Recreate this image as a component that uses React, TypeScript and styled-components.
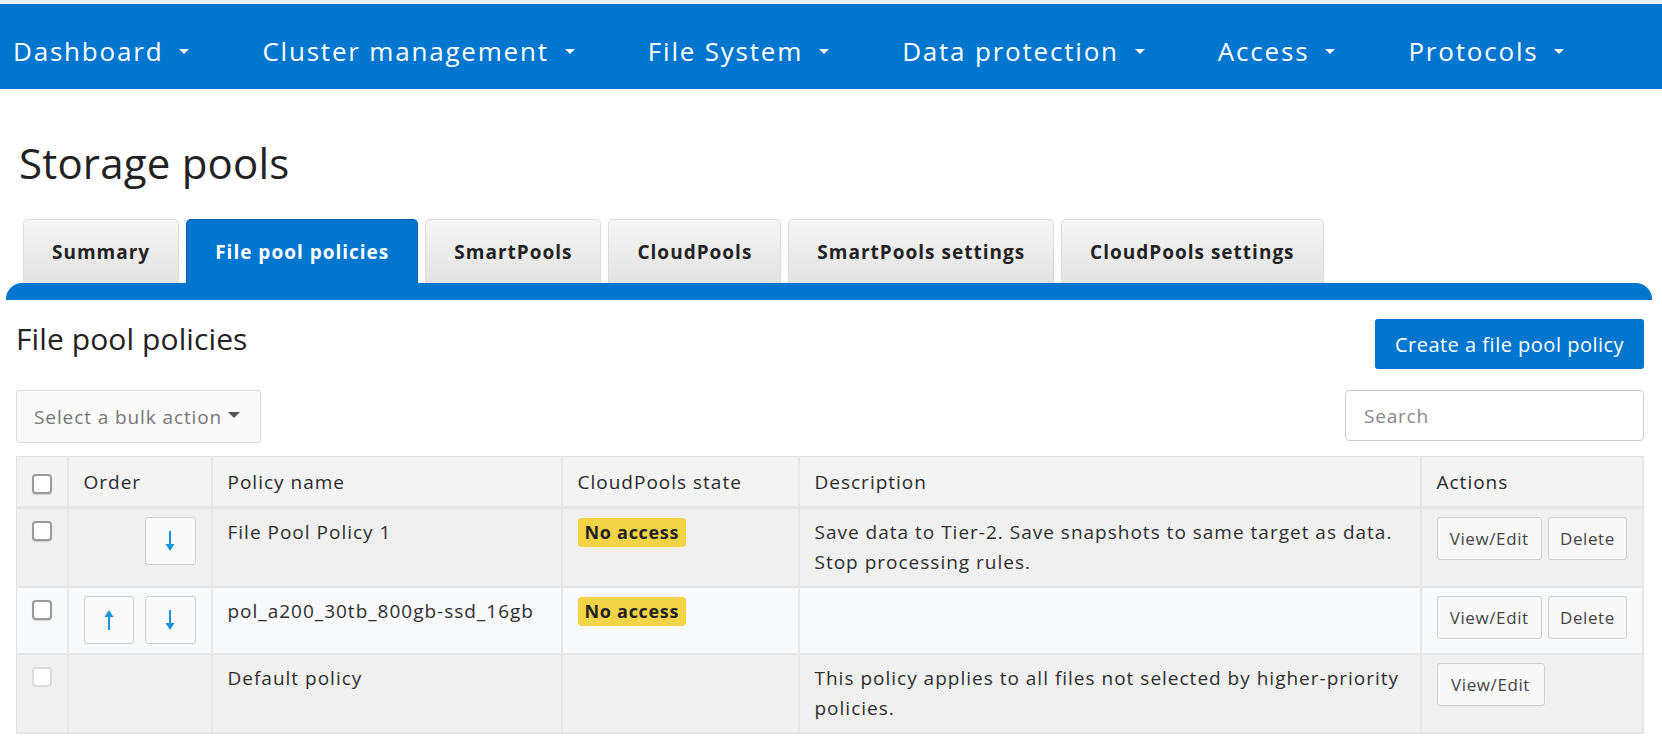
import styled, { createGlobalStyle } from "styled-components";

const GlobalStyle = createGlobalStyle`
    body {
        margin: 0;
        background: #fff;
        font-family: "Open Sans", "Noto Sans", sans-serif;
        color: #333;
    }
    * {
        box-sizing: border-box;
    }
`;

const BLUE = "#0076ce";

const Page = styled.div`
    padding-top: 4px;
    background: linear-gradient(#e8f1fa 0, #e8f1fa 4px, #fff 4px);
`;

const NavBar = styled.nav`
    height: 85px;
    background-color: ${BLUE};
    display: flex;
    align-items: center;
    padding: 8px 0 0 13px;
    gap: 73px;
`;

const NavItem = styled.div`
    color: #fff;
    font-size: 26px;
    letter-spacing: 1.8px;
    display: flex;
    align-items: center;
    gap: 16px;
`;

const Caret = styled.span`
    width: 0;
    height: 0;
    border-left: 5px solid transparent;
    border-right: 5px solid transparent;
    border-top: 5px solid #fff;
    margin-top: 2px;
`;

const Content = styled.main`
    padding: 0 18px 0 16px;
`;

const Title = styled.h1`
    margin: 49px 0 0 3px;
    font-size: 42px;
    font-weight: 400;
    line-height: 50px;
    color: #222;
    letter-spacing: 0.2px;
`;

const TabRow = styled.div`
    display: flex;
    gap: 7px;
    padding-left: 7px;
    margin-top: 31px;
`;

const Tab = styled.div<{ $active?: boolean }>`
    height: 64px;
    padding: 0 28px;
    display: flex;
    align-items: center;
    justify-content: center;
    font-size: 19px;
    font-weight: 700;
    letter-spacing: 1px;
    border-radius: 5px 5px 0 0;
    border: 1px solid ${(p) => (p.$active ? "#0a5fa6" : "#dcdcdc")};
    border-bottom: none;
    color: ${(p) => (p.$active ? "#fff" : "#222")};
    background: ${(p) =>
        p.$active ? BLUE : "linear-gradient(#f6f6f6, #e2e2e2)"};
`;

const TabBar = styled.div`
    height: 17px;
    margin: 0 -8px 0 -10px;
    background-color: ${BLUE};
    border-radius: 16px 16px 0 0;
`;

const SectionHeader = styled.div`
    display: flex;
    justify-content: space-between;
    align-items: flex-start;
    margin-top: 19px;
`;

const SectionTitle = styled.h2`
    margin: 1px 0 0;
    font-size: 30px;
    font-weight: 400;
    line-height: 38px;
    letter-spacing: 0.1px;
    color: #222;
`;

const PrimaryButton = styled.button`
    height: 50px;
    width: 269px;
    border: none;
    border-radius: 3px;
    background-color: ${BLUE};
    color: #fff;
    font-family: inherit;
    font-size: 20px;
    font-weight: 500;
    letter-spacing: 0.5px;
    padding: 0;
`;

const Toolbar = styled.div`
    display: flex;
    justify-content: space-between;
    align-items: flex-start;
    margin-top: 21px;
`;

const BulkSelect = styled.div`
    width: 245px;
    height: 53px;
    border: 1px solid #dcdcdc;
    border-radius: 3px;
    background: #fafafa;
    color: #777;
    font-size: 19px;
    letter-spacing: 0.9px;
    display: flex;
    align-items: center;
    padding-left: 17px;
    gap: 6px;
    white-space: nowrap;
`;

const DarkCaret = styled.span`
    width: 0;
    height: 0;
    border-left: 6px solid transparent;
    border-right: 6px solid transparent;
    border-top: 6px solid #555;
    margin-top: -3px;
`;

const SearchInput = styled.input`
    width: 299px;
    height: 51px;
    border: 1px solid #ccc;
    border-radius: 4px;
    padding-left: 18px;
    font-family: inherit;
    font-size: 19px;
    letter-spacing: 0.8px;
    &::placeholder {
        color: #888;
    }
`;

const Table = styled.table`
    width: 100%;
    margin-top: 13px;
    border-collapse: collapse;
    table-layout: fixed;
    font-size: 19px;
    letter-spacing: 1px;
    border: 1px solid #e4e4e4;
`;

const Th = styled.th`
    background: #f3f3f3;
    text-align: left;
    font-weight: 500;
    color: #2a2a2a;
    padding: 10px 15px 9px;
    line-height: 30px;
    border-right: 2px solid #e6e6e6;
    border-bottom: 3px solid #e6e6e6;
`;

const Tr = styled.tr<{ $light?: boolean }>`
    background: ${(p) => (p.$light ? "#f8f9fa" : "#f0f0f0")};
    border-bottom: 2px solid #e6e6e6;
`;

const Td = styled.td`
    vertical-align: top;
    padding: 8px 15px 9px;
    line-height: 30px;
    border-right: 2px solid #e6e6e6;
    color: #2e2e2e;
`;

const Check = styled.span<{ $disabled?: boolean }>`
    display: block;
    width: 20px;
    height: 20px;
    margin: 4px 0 0 0;
    border: 2px solid ${(p) => (p.$disabled ? "#dadada" : "#9a9a9a")};
    border-radius: 4px;
    background: #fff;
    box-shadow: ${(p) => (p.$disabled ? "none" : "0 1px 1px rgba(0,0,0,0.15)")};
`;

const OrderCell = styled.div`
    display: flex;
    gap: 11px;
`;

const ArrowButton = styled.button<{ $hidden?: boolean }>`
    width: 51px;
    height: 48px;
    border: 1px solid #cfcfcf;
    border-radius: 3px;
    background: #fafafa;
    display: flex;
    align-items: center;
    justify-content: center;
    padding: 0;
    visibility: ${(p) => (p.$hidden ? "hidden" : "visible")};
`;

const Badge = styled.span`
    display: inline-block;
    background: #f4d447;
    color: #222;
    font-weight: 700;
    font-size: 18px;
    letter-spacing: 0.7px;
    line-height: 29px;
    padding: 0 7px;
    border-radius: 4px;
    margin-top: 1px;
`;

const Actions = styled.div`
    display: flex;
    gap: 6px;
`;

const SmallButton = styled.button<{ $w: number }>`
    width: ${(p) => p.$w}px;
    height: 43px;
    border: 1px solid #cfcfcf;
    border-radius: 3px;
    background: #f8f8f8;
    font-family: inherit;
    font-size: 17px;
    letter-spacing: 0.6px;
    color: #444;
    padding: 0;
`;

function Arrow({ up }: { up?: boolean }) {
    return (
        <svg width="10" height="22" viewBox="0 0 10 22">
            <g transform={up ? "rotate(180 5 11)" : undefined} fill="#1a93d8">
                <rect x="4" y="1" width="2" height="15" />
                <polygon points="0.5,14 9.5,14 5,21" />
            </g>
        </svg>
    );
}

const navItems = [
    "Dashboard",
    "Cluster management",
    "File System",
    "Data protection",
    "Access",
    "Protocols",
];

const tabs = [
    "Summary",
    "File pool policies",
    "SmartPools",
    "CloudPools",
    "SmartPools settings",
    "CloudPools settings",
];

interface Policy {
    name: string;
    up: boolean;
    down: boolean;
    state?: string;
    description?: string;
    canDelete: boolean;
    isDefault?: boolean;
}

const policies: Policy[] = [
    {
        name: "File Pool Policy 1",
        up: false,
        down: true,
        state: "No access",
        description:
            "Save data to Tier-2. Save snapshots to same target as data. Stop processing rules.",
        canDelete: true,
    },
    {
        name: "pol_a200_30tb_800gb-ssd_16gb",
        up: true,
        down: true,
        state: "No access",
        canDelete: true,
    },
    {
        name: "Default policy",
        up: false,
        down: false,
        description:
            "This policy applies to all files not selected by higher-priority policies.",
        canDelete: false,
        isDefault: true,
    },
];

export default function App() {
    return (
        <Page>
            <GlobalStyle />
            <NavBar>
                {navItems.map((item) => (
                    <NavItem key={item}>
                        {item}
                        <Caret />
                    </NavItem>
                ))}
            </NavBar>
            <Content>
                <Title>Storage pools</Title>
                <TabRow>
                    {tabs.map((t) => (
                        <Tab key={t} $active={t === "File pool policies"}>
                            {t}
                        </Tab>
                    ))}
                </TabRow>
                <TabBar />
                <SectionHeader>
                    <SectionTitle>File pool policies</SectionTitle>
                    <PrimaryButton>Create a file pool policy</PrimaryButton>
                </SectionHeader>
                <Toolbar>
                    <BulkSelect>
                        Select a bulk action
                        <DarkCaret />
                    </BulkSelect>
                    <SearchInput placeholder="Search" />
                </Toolbar>
                <Table>
                    <colgroup>
                        <col style={{ width: 51 }} />
                        <col style={{ width: 144 }} />
                        <col style={{ width: 350 }} />
                        <col style={{ width: 237 }} />
                        <col style={{ width: 622 }} />
                        <col />
                    </colgroup>
                    <thead>
                        <tr>
                            <Th>
                                <Check />
                            </Th>
                            <Th>Order</Th>
                            <Th>Policy name</Th>
                            <Th>CloudPools state</Th>
                            <Th>Description</Th>
                            <Th>Actions</Th>
                        </tr>
                    </thead>
                    <tbody>
                        {policies.map((p, i) => (
                            <Tr key={p.name} $light={i === 1}>
                                <Td>
                                    <Check $disabled={p.isDefault} />
                                </Td>
                                <Td>
                                    {(p.up || p.down) && (
                                        <OrderCell>
                                            <ArrowButton $hidden={!p.up}>
                                                <Arrow up />
                                            </ArrowButton>
                                            <ArrowButton $hidden={!p.down}>
                                                <Arrow />
                                            </ArrowButton>
                                        </OrderCell>
                                    )}
                                </Td>
                                <Td>{p.name}</Td>
                                <Td>{p.state && <Badge>{p.state}</Badge>}</Td>
                                <Td>{p.description}</Td>
                                <Td>
                                    <Actions>
                                        <SmallButton $w={108}>View/Edit</SmallButton>
                                        {p.canDelete && (
                                            <SmallButton $w={81}>Delete</SmallButton>
                                        )}
                                    </Actions>
                                </Td>
                            </Tr>
                        ))}
                    </tbody>
                </Table>
            </Content>
        </Page>
    );
}
